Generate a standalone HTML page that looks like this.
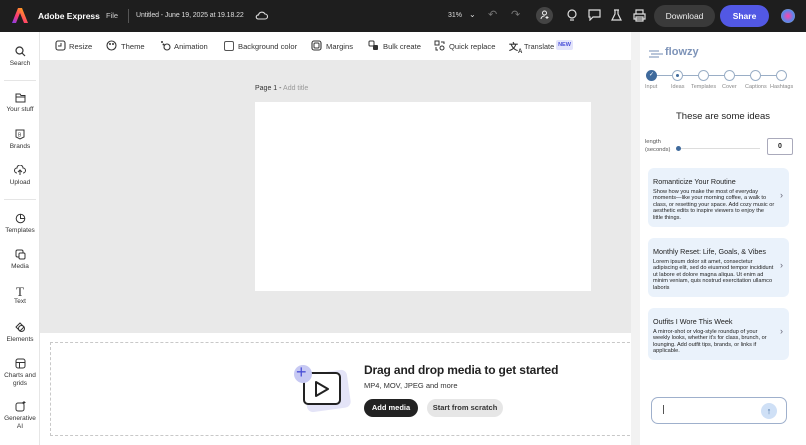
<!DOCTYPE html>
<html><head><meta charset="utf-8"><style>
*{box-sizing:border-box;margin:0;padding:0}
body{width:806px;height:445px;overflow:hidden;font-family:"Liberation Sans",sans-serif;background:#fff;position:relative;color:#222}
.abs{position:absolute}
.top{left:0;top:0;width:806px;height:32px;background:#1e1e1e;color:#fff}
.side{left:0;top:32px;width:40px;height:413px;background:#fff;border-right:1px solid #e6e6e6}
.si{position:absolute;left:0;width:40px;text-align:center;font-size:6.5px;color:#333;line-height:8px}
.si svg{display:block;margin:0 auto 3px}
.tb{left:40px;top:32px;width:600px;height:28px;background:#fff;font-size:7.6px;color:#333}
.tb span{position:absolute;top:10px}
.canvas{left:40px;top:60px;width:591px;height:273px;background:#e9e9e9}
.card{left:648px;width:141px;background:#eaf2fb;border-radius:6px;padding:11px 14px 6px 5px;font-size:5.6px;line-height:6.6px;color:#222}
.card b{display:block;font-size:7.2px;font-weight:normal;margin-bottom:3px;color:#222}
.card i{position:absolute;right:6px;top:50%;margin-top:-6px;font-style:normal;font-size:9px;color:#667}
.st{position:absolute;top:70px;width:11px;height:11px;border-radius:50%;border:1px solid #9aaec6;background:#fff}
.sl{position:absolute;top:84px;font-size:5.5px;color:#888}
</style></head><body>
<div class="abs top">
 <svg class="abs" style="left:12px;top:8px" width="16" height="15" viewBox="0 0 16 15"><defs><linearGradient id="g" x1="0" y1="1" x2="1" y2="0"><stop offset="0" stop-color="#7b3cf5"/><stop offset=".4" stop-color="#ff3b6f"/><stop offset=".8" stop-color="#ff9a1f"/></linearGradient></defs><path d="M6 0h4l6 15h-4l-4-10-4 10H0z" fill="url(#g)"/></svg>
 <span class="abs" style="left:38px;top:11px;font-size:8.5px;font-weight:bold">Adobe Express</span>
 <span class="abs" style="left:106px;top:11px;font-size:7.5px;color:#ccc">File</span>
 <div class="abs" style="left:128px;top:9px;width:1px;height:14px;background:#555"></div>
 <span class="abs" style="left:136px;top:11.5px;font-size:7px;color:#ddd;letter-spacing:-0.1px">Untitled - June 19, 2025 at 19.18.22</span>
 <svg class="abs" style="left:255px;top:10px" width="13" height="10" viewBox="0 0 13 10"><path d="M3 9h7a2.5 2.5 0 0 0 0-5A3.5 3.5 0 0 0 3.5 5 2 2 0 0 0 3 9z" fill="none" stroke="#ddd" stroke-width="1.1"/></svg>
 <span class="abs" style="left:448px;top:12px;font-size:7px;color:#ddd">31%</span>
 <span class="abs" style="left:469px;top:10px;font-size:8px;color:#ddd">⌄</span>
 <span class="abs" style="left:488px;top:8px;font-size:11px;color:#777">↶</span>
 <span class="abs" style="left:511px;top:8px;font-size:11px;color:#777">↷</span>
 <div class="abs" style="left:536px;top:7px;width:17px;height:17px;border-radius:50%;background:#444"></div>
 <svg class="abs" style="left:540px;top:10px" width="10" height="10" viewBox="0 0 10 10"><circle cx="4.5" cy="3" r="2" fill="none" stroke="#eee"/><path d="M1 9c0-2 2-3 3.5-3M7 6v3M5.5 7.5h3" stroke="#eee" fill="none"/></svg>
 <svg class="abs" style="left:566px;top:9px" width="12" height="13" viewBox="0 0 12 13"><circle cx="6" cy="5" r="4" fill="none" stroke="#ddd" stroke-width="1.2"/><path d="M4 11h4" stroke="#ddd" stroke-width="1.2"/></svg>
 <svg class="abs" style="left:588px;top:9px" width="13" height="12" viewBox="0 0 13 12"><path d="M1 1h11v7H5l-3 3V8H1z" fill="none" stroke="#ddd" stroke-width="1.2"/></svg>
 <svg class="abs" style="left:611px;top:9px" width="11" height="13" viewBox="0 0 11 13"><path d="M3 1h5M4 1v4L1 11h9L7 5V1" fill="none" stroke="#ddd" stroke-width="1.2"/></svg>
 <svg class="abs" style="left:633px;top:9px" width="13" height="13" viewBox="0 0 13 13"><path d="M3 5V1h7v4M1 5h11v5H1zM3 8h7v4H3z" fill="none" stroke="#ddd" stroke-width="1.2"/></svg>
 <div class="abs" style="left:654px;top:5px;width:61px;height:22px;border-radius:11px;background:#3a3a3a;font-size:8.5px;text-align:center;line-height:22px;color:#eee">Download</div>
 <div class="abs" style="left:720px;top:5px;width:49px;height:22px;border-radius:11px;background:#5258e4;font-size:8.5px;text-align:center;line-height:22px;font-weight:bold">Share</div>
 <div class="abs" style="left:781px;top:9px;width:14px;height:14px;border-radius:50%;background:radial-gradient(circle,#f4a 0,#58e 60%,#fa4 100%)"></div>
</div>

<div class="abs side">
 <div class="si" style="top:14px"><svg width="11" height="11" viewBox="0 0 11 11"><circle cx="4.5" cy="4.5" r="3.5" fill="none" stroke="#333" stroke-width="1.2"/><path d="M7 7l3 3" stroke="#333" stroke-width="1.2"/></svg>Search</div>
 <div class="abs" style="left:4px;top:48px;width:32px;height:1px;background:#e5e5e5"></div>
 <div class="si" style="top:61px"><svg width="11" height="10" viewBox="0 0 11 10"><path d="M1 1h4l1 1.5h4V9H1z M1 4h9" fill="none" stroke="#333"/></svg>Your stuff</div>
 <div class="si" style="top:97px"><svg width="10" height="11" viewBox="0 0 10 11"><path d="M1 1h8v7l-4 2-4-2z" fill="none" stroke="#333"/><text x="3" y="7.5" font-size="5" fill="#333">B</text></svg>Brands</div>
 <div class="si" style="top:133px"><svg width="12" height="11" viewBox="0 0 12 11"><path d="M3 8a2.5 2.5 0 0 1 0-5 3 3 0 0 1 6 0 2.5 2.5 0 0 1 0 5M6 10V5M4 7l2-2 2 2" fill="none" stroke="#333"/></svg>Upload</div>
 <div class="abs" style="left:4px;top:167px;width:32px;height:1px;background:#e5e5e5"></div>
 <div class="si" style="top:181px"><svg width="11" height="11" viewBox="0 0 11 11"><circle cx="5.5" cy="5.5" r="4.3" fill="none" stroke="#333"/><path d="M5.5 1.5v4h4" fill="none" stroke="#333"/></svg>Templates</div>
 <div class="si" style="top:217px"><svg width="11" height="11" viewBox="0 0 11 11"><rect x="1" y="1" width="7" height="7" rx="1.5" fill="none" stroke="#333"/><rect x="4" y="4" width="6" height="6" rx="1.2" fill="#fff" stroke="#333"/></svg>Media</div>
 <div class="si" style="top:253px"><span style="display:block;font-family:'Liberation Serif',serif;font-size:13px;line-height:13px">T</span>Text</div>
 <div class="si" style="top:290px"><svg width="11" height="11" viewBox="0 0 11 11"><path d="M5 1l4 4-4 4-4-4z" fill="none" stroke="#333"/><circle cx="6.5" cy="6.5" r="3" fill="none" stroke="#333"/></svg>Elements</div>
 <div class="si" style="top:326px"><svg width="11" height="11" viewBox="0 0 11 11"><rect x="1" y="1" width="9" height="9" rx="2" fill="none" stroke="#333"/><path d="M1 4.5h9M4.5 4.5V10" stroke="#333"/></svg>Charts and<br>grids</div>
 <div class="si" style="top:369px"><svg width="11" height="11" viewBox="0 0 11 11"><rect x="1" y="2" width="8" height="8" rx="2" fill="none" stroke="#333"/><path d="M9 0v3M7.5 1.5h3" stroke="#333"/></svg>Generative<br>AI</div>
</div>

<div class="abs tb">
 <svg class="abs" style="left:15px;top:8px" width="11" height="11" viewBox="0 0 11 11"><rect x="1" y="1" width="9" height="9" rx="2" fill="none" stroke="#333" stroke-width="1.1"/><path d="M3 6h3V3" fill="none" stroke="#333"/></svg><span style="left:29px">Resize</span>
 <svg class="abs" style="left:66px;top:8px" width="11" height="11" viewBox="0 0 11 11"><circle cx="5.5" cy="5.5" r="4.5" fill="none" stroke="#333" stroke-width="1.1"/><circle cx="4" cy="4" r="1" fill="#333"/><circle cx="7" cy="4" r="1" fill="#333"/></svg><span style="left:81px">Theme</span>
 <svg class="abs" style="left:120px;top:8px" width="11" height="11" viewBox="0 0 11 11"><circle cx="7" cy="7" r="3" fill="none" stroke="#333" stroke-width="1.1"/><circle cx="2" cy="2" r="1" fill="#333"/><circle cx="3.5" cy="4.5" r="1" fill="#333"/></svg><span style="left:134px">Animation</span>
 <div class="abs" style="left:184px;top:9px;width:10px;height:10px;border:1px solid #555;border-radius:2px"></div><span style="left:198px">Background color</span>
 <svg class="abs" style="left:271px;top:8px" width="11" height="11" viewBox="0 0 11 11"><rect x="1" y="1" width="9" height="9" rx="2" fill="none" stroke="#333" stroke-width="1.1"/><rect x="3" y="3" width="5" height="5" rx="1" fill="none" stroke="#333"/></svg><span style="left:286px">Margins</span>
 <svg class="abs" style="left:328px;top:8px" width="11" height="11" viewBox="0 0 11 11"><rect x="1" y="1" width="5" height="5" rx="1" fill="none" stroke="#333"/><rect x="5" y="5" width="5" height="5" rx="1" fill="#333"/></svg><span style="left:343px">Bulk create</span>
 <svg class="abs" style="left:394px;top:8px" width="11" height="11" viewBox="0 0 11 11"><rect x="1" y="1" width="4" height="4" fill="none" stroke="#333"/><circle cx="8" cy="8" r="2" fill="none" stroke="#333"/><path d="M7 2h3v2M2 7v3h2" fill="none" stroke="#333"/></svg><span style="left:409px">Quick replace</span>
 <span style="left:469px;top:8px;font-size:9px;font-weight:bold">文<sub style="font-size:6px">A</sub></span><span style="left:484px;font-size:7.3px">Translate</span>
 <div class="abs" style="left:516px;top:8px;width:17px;height:10px;background:#e3e4fb;color:#4a50d8;font-size:5.5px;font-weight:bold;text-align:center;line-height:10px;border-radius:2px">NEW</div>
</div>

<div class="abs canvas"></div>
<div class="abs" style="left:255px;top:85px;font-size:7px;color:#333">Page 1 - <span style="color:#999">Add title</span></div>
<div class="abs" style="left:255px;top:102px;width:336px;height:189px;background:#fff"></div>

<div class="abs" style="left:50px;top:342px;width:590px;height:94px;border:1px dashed #c8c8c8;border-right:none"></div>
<div class="abs" style="left:305px;top:372px;width:44px;height:38px;background:#e4e4f7;border-radius:6px;transform:rotate(-8deg)"></div>
<div class="abs" style="left:303px;top:372px;width:38px;height:33px;border:2px solid #222;border-radius:5px;background:#fff"></div>
<svg class="abs" style="left:313px;top:380px" width="18" height="18" viewBox="0 0 18 18"><path d="M3 2l12 7-12 7z" fill="none" stroke="#222" stroke-width="2" stroke-linejoin="round"/></svg>
<div class="abs" style="left:294px;top:365px;width:18px;height:18px;border-radius:50%;background:#c7c9f3"></div>
<div class="abs" style="left:296px;top:363px;font-size:18px;color:#4a4fd6;line-height:18px">+</div>
<div class="abs" style="left:364px;top:363px;font-size:12px;font-weight:bold;color:#222;letter-spacing:-0.15px">Drag and drop media to get started</div>
<div class="abs" style="left:364px;top:381px;font-size:7.5px;color:#333">MP4, MOV, JPEG and more</div>
<div class="abs" style="left:364px;top:399px;width:54px;height:18px;border-radius:9px;background:#222;color:#fff;font-size:7.5px;font-weight:bold;text-align:center;line-height:18px">Add media</div>
<div class="abs" style="left:427px;top:399px;width:76px;height:18px;border-radius:9px;background:#e6e6e6;color:#333;font-size:7.5px;font-weight:bold;text-align:center;line-height:18px">Start from scratch</div>

<div class="abs" style="left:631px;top:32px;width:9px;height:413px;background:#f2f2f2"></div>
<div class="abs" style="left:640px;top:32px;width:166px;height:413px;background:#fff"></div>
<svg class="abs" style="left:648px;top:49px" width="16" height="10" viewBox="0 0 16 10"><path d="M1 2h10M3 5h12M1 8h10" stroke="#8fa4c4" stroke-width="1.2"/></svg>
<div class="abs" style="left:665px;top:46px;font-size:11px;font-weight:bold;color:#7d93b8">flowzy</div>
<div class="abs" style="left:652px;top:75px;width:130px;height:1px;background:#9aaec6"></div>
<div class="st" style="left:646px;background:#3f6a9c;border-color:#3f6a9c;color:#fff;font-size:6px;text-align:center;line-height:9px">✓</div>
<div class="st" style="left:672px"><div style="width:3px;height:3px;background:#3f6a9c;border-radius:50%;margin:3px"></div></div>
<div class="st" style="left:698px"></div><div class="st" style="left:724px"></div><div class="st" style="left:750px"></div><div class="st" style="left:776px"></div>
<div class="sl" style="left:645px">Input</div><div class="sl" style="left:671px">Ideas</div><div class="sl" style="left:691px">Templates</div><div class="sl" style="left:722px">Cover</div><div class="sl" style="left:745px">Captions</div><div class="sl" style="left:770px">Hashtags</div>
<div class="abs" style="left:640px;top:111px;width:166px;text-align:center;font-size:9.5px;color:#222">These are some ideas</div>
<div class="abs" style="left:645px;top:138px;font-size:5.8px;line-height:8px;color:#555">length<br>(seconds)</div>
<div class="abs" style="left:680px;top:148px;width:80px;height:1px;background:#ddd"></div>
<div class="abs" style="left:676px;top:146px;width:5px;height:5px;border-radius:50%;background:#3f6a9c"></div>
<div class="abs" style="left:767px;top:138px;width:26px;height:17px;border:1px solid #aab;border-radius:2px;font-size:7px;text-align:center;line-height:15px;font-weight:bold">0</div>
<div class="abs card" style="top:168px;height:59px"><b>Romanticize Your Routine</b>Show how you make the most of everyday moments—like your morning coffee, a walk to class, or resetting your space. Add cozy music or aesthetic edits to inspire viewers to enjoy the little things.<i>›</i></div>
<div class="abs card" style="top:238px;height:59px"><b>Monthly Reset: Life, Goals, &amp; Vibes</b>Lorem ipsum dolor sit amet, consectetur adipiscing elit, sed do eiusmod tempor incididunt ut labore et dolore magna aliqua. Ut enim ad minim veniam, quis nostrud exercitation ullamco laboris<i>›</i></div>
<div class="abs card" style="top:308px;height:52px"><b>Outfits I Wore This Week</b>A mirror-shot or vlog-style roundup of your weekly looks, whether it's for class, brunch, or lounging. Add outfit tips, brands, or links if applicable.<i>›</i></div>
<div class="abs" style="left:651px;top:397px;width:136px;height:27px;border:1px solid #9fb0cc;border-radius:7px"></div>
<div class="abs" style="left:663px;top:405px;width:1px;height:9px;background:#555"></div>
<div class="abs" style="left:761px;top:403px;width:16px;height:16px;border-radius:50%;background:#cfe0f6;color:#3f6a9c;font-size:9px;text-align:center;line-height:16px">↑</div>
</body></html>
